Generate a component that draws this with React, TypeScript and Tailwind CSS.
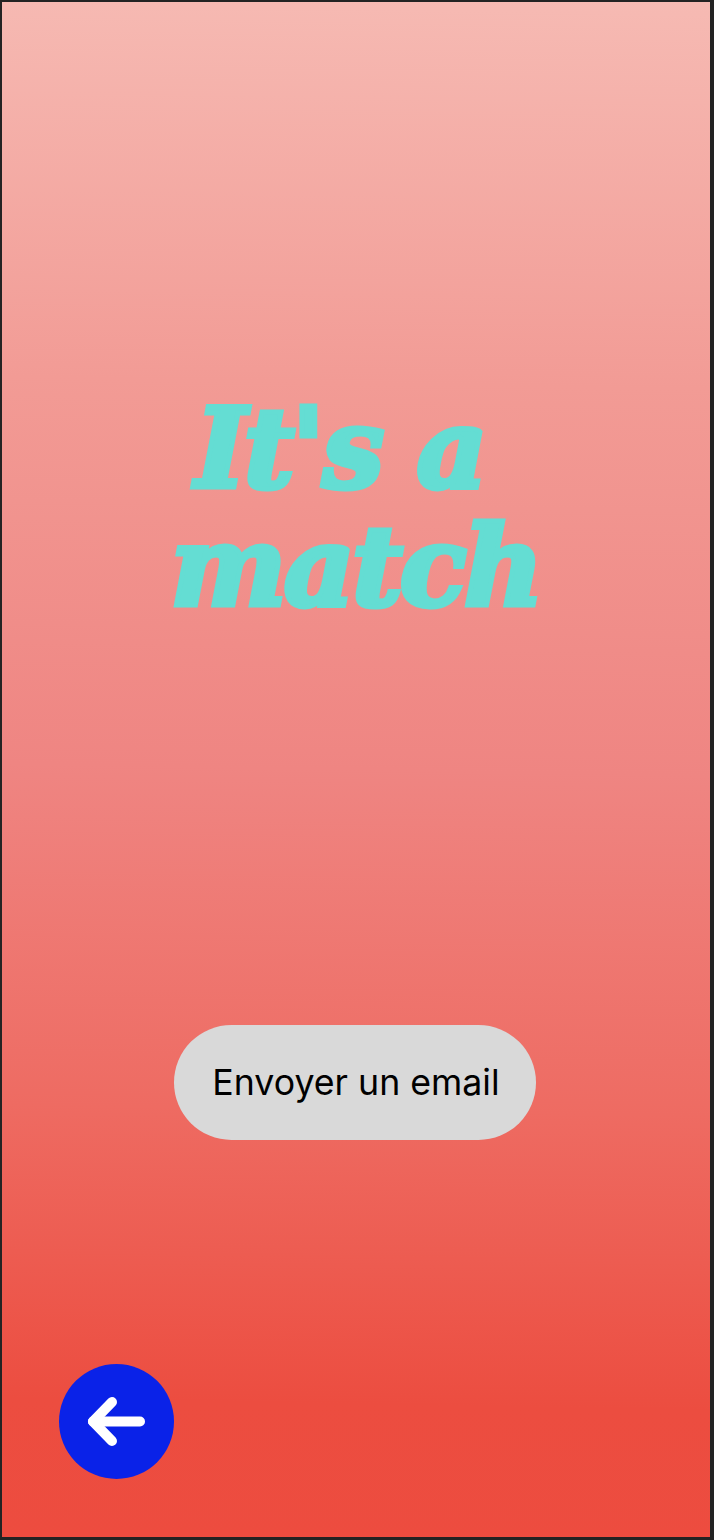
export default function App() {
  return (
    <div className="w-[714px] h-[1540px] bg-[#232323] pl-[2px] pt-[2px] pr-[4px] pb-[3px] overflow-hidden">
      <div className="h-full flex flex-col bg-[linear-gradient(181deg,#f6bab3_0%,#f29b95_25%,#ef8582_50%,#ee6b62_72%,#ec4d40_91%,#ed4c3f_100%)]">
        <div className="mt-[388px] h-[247px] flex flex-col items-center font-['DejaVu_Serif',serif] font-bold italic text-[#64ddd3] text-[110px] leading-[118px] tracking-[-3px] [-webkit-text-stroke:5px_#64ddd3]">
          <div className="ml-[-32px]">It's a</div>
          <div className="ml-[-1px]">match</div>
        </div>
        <button className="mt-[388px] ml-[172px] w-[362px] h-[115px] pl-[2px] shrink-0 rounded-full bg-[#d9d9d9] text-black font-['Inter',sans-serif] text-[35.7px]">
          Envoyer un email
        </button>
        <button className="mt-[224px] ml-[57px] w-[115px] h-[115px] shrink-0 rounded-full bg-[#0a22e8] flex items-center justify-center">
          <svg width="115" height="115" viewBox="0 0 115 115" fill="none" stroke="#fff" strokeWidth="10" strokeLinecap="round" strokeLinejoin="round">
            <path d="M81 57.5H34" />
            <path d="M53 38L34 57.5L53 77" />
          </svg>
        </button>
      </div>
    </div>
  );
}
